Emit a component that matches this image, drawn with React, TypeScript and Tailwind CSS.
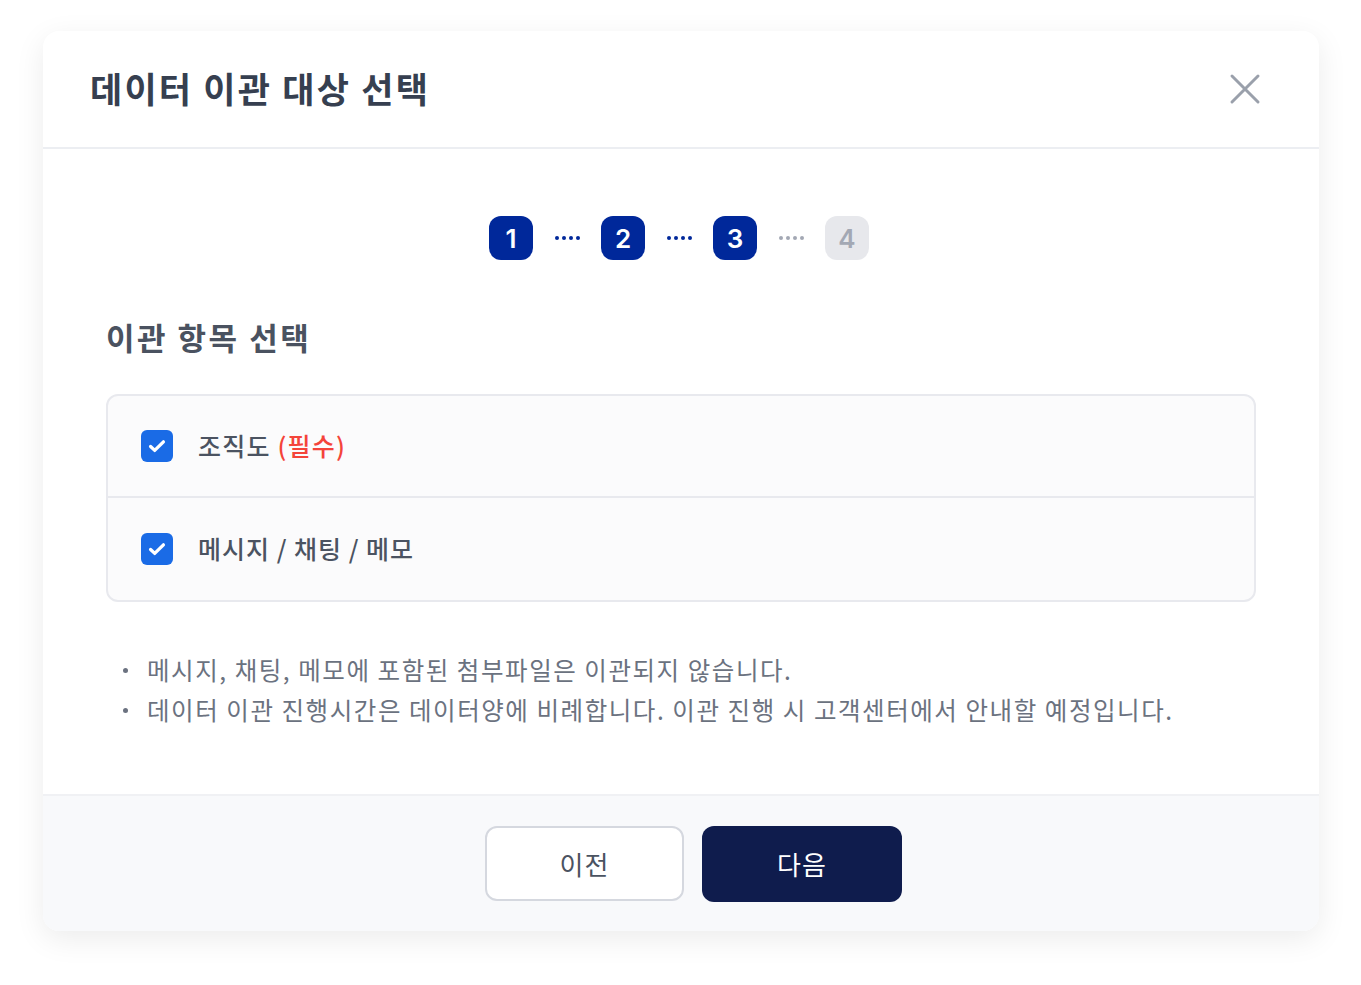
import React from "react";

const font = { fontFamily: '"Noto Sans CJK KR", "Noto Sans", sans-serif' };

function Check() {
  return (
    <div className="w-8 h-8 rounded-md bg-[#1a6be6] flex items-center justify-center shrink-0">
      <svg width="22" height="22" viewBox="0 0 24 24" fill="none" stroke="white" strokeWidth="3.6" strokeLinecap="round" strokeLinejoin="round">
        <path d="M5 12.5l4.5 4.3L19 7.5" />
      </svg>
    </div>
  );
}

function Dots({ active }: { active: boolean }) {
  return (
    <div className="flex items-center gap-[3px] mx-[21.5px]">
      {[0, 1, 2, 3].map((i) => (
        <span key={i} className={`w-[4px] h-[4px] rounded-full ${active ? "bg-[#00289a]" : "bg-[#a3a8b4]"}`} />
      ))}
    </div>
  );
}

function Step({ n, active }: { n: number; active: boolean }) {
  return (
    <div
      className={`w-11 h-11 rounded-xl flex items-center justify-center text-[26px] font-semibold ${
        active ? "bg-[#00289a] text-white" : "bg-[#e7e8ec] text-[#a3a8b4]"
      }`}
      style={{ fontFamily: '"Inter", "Noto Sans", sans-serif' }}
    >
      {n}
    </div>
  );
}

export default function App() {
  return (
    <div className="w-[1361px] h-[985px] bg-white pt-[31px] pl-[43px]" style={font}>
      <div className="w-[1276px] h-[900px] rounded-2xl bg-white shadow-[0_8px_30px_rgba(0,0,0,0.08)] flex flex-col overflow-hidden">
        <div className="h-[118px] shrink-0 flex items-center justify-between pl-[47px] pr-[58px] border-b-2 border-[#eceef2]">
          <h1 className="text-[35px] font-bold text-[#363f50] tracking-[2.2px] pb-[2px]">데이터 이관 대상 선택</h1>
          <svg width="32" height="32" viewBox="0 0 32 32" fill="none" stroke="#9aa0ab" strokeWidth="3" strokeLinecap="round">
            <path d="M3 3l26 26M29 3L3 29" />
          </svg>
        </div>
        <div className="flex-1 px-[63px]">
          <div className="flex items-center justify-center mt-[67px] pr-[4px]">
            <Step n={1} active />
            <Dots active />
            <Step n={2} active />
            <Dots active />
            <Step n={3} active />
            <Dots active={false} />
            <Step n={4} active={false} />
          </div>
          <h2 className="mt-[57px] text-[31px] font-bold text-[#4a5260] leading-[40px] tracking-[2.5px]">이관 항목 선택</h2>
          <div className="mt-[37px] rounded-xl border-2 border-[#e8e9ee] bg-[#fbfbfc]">
            <div className="h-[102px] flex items-center pl-[33px] gap-[25px] border-b-2 border-[#e8e9ee]">
              <Check />
              <span className="text-[25px] font-medium text-[#4b5361] tracking-[1.2px]">
                조직도 <span className="text-[#f4443a]">(필수)</span>
              </span>
            </div>
            <div className="h-[102px] flex items-center pl-[33px] gap-[25px]">
              <Check />
              <span className="text-[25px] font-medium text-[#4b5361] tracking-[1px]">메시지 / 채팅 / 메모</span>
            </div>
          </div>
          <ul className="mt-[48px] text-[24.5px] text-[#6b7280] leading-[40px] pl-[17px] tracking-[1.55px]">
            <li className="flex items-center">
              <span className="w-[5px] h-[5px] rounded-full bg-[#6b7280] mr-[19px]" />
              메시지, 채팅, 메모에 포함된 첨부파일은 이관되지 않습니다.
            </li>
            <li className="flex items-center">
              <span className="w-[5px] h-[5px] rounded-full bg-[#6b7280] mr-[19px]" />
              데이터 이관 진행시간은 데이터양에 비례합니다. 이관 진행 시 고객센터에서 안내할 예정입니다.
            </li>
          </ul>
        </div>
        <div className="h-[137px] shrink-0 bg-[#f8f9fb] border-t-2 border-[#f0f1f4] flex items-center justify-center gap-[18px] pl-[25px]">
          <button className="w-[199px] h-[75px] rounded-xl border-2 border-[#d5d8df] bg-white text-[26px] text-[#4b5361] tracking-[1px]">
            이전
          </button>
          <button className="w-[200px] h-[76px] rounded-xl bg-[#0f1c4d] text-[26px] text-white tracking-[1px]">다음</button>
        </div>
      </div>
    </div>
  );
}
